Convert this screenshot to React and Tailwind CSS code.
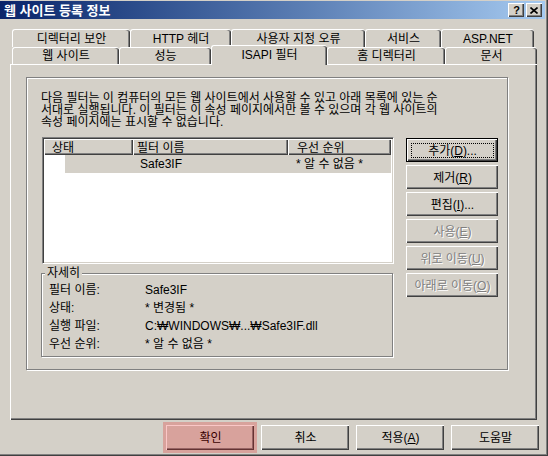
// 웹 사이트 등록 정보 (클래식 Windows 대화 상자)
const raised =
  "bg-[#d4d0c8] border-t border-l border-white shadow-[inset_-1px_-1px_0_#404040,inset_-2px_-2px_0_#808080]";
const etched = "border border-[#808080] shadow-[inset_1px_1px_0_#fff,1px_1px_0_#fff]";
const tabBase =
  "flex items-center justify-center rounded-t-[3px] border-t border-l border-white shadow-[inset_-1px_0_0_#404040,inset_-2px_0_0_#808080] bg-[#d4d0c8]";

function Tab({ className = "", children }) {
  return <div className={`${tabBase} ${className}`}>{children}</div>;
}

function Btn({ children, disabled = false, isDefault = false, className = "" }) {
  const text = disabled ? "text-[#808080] [text-shadow:1px_1px_0_#fff]" : "text-black";
  if (isDefault) {
    return (
      <div className={`border border-black ${className}`}>
        <div className={`${raised} h-full flex items-center justify-center p-[3px]`}>
          <div className="w-full h-full border border-dotted border-black flex items-center justify-center">
            <span className={text}>{children}</span>
          </div>
        </div>
      </div>
    );
  }
  return (
    <div className={`${raised} flex items-center justify-center ${className}`}>
      <span className={text}>{children}</span>
    </div>
  );
}

export default function App() {
  return (
    <div className="w-[548px] h-[456px] bg-[#d4d0c8] pt-[1px] overflow-hidden flex flex-col text-[12px] leading-[12px] text-black font-['Liberation_Sans','Noto_Sans_CJK_KR',sans-serif] shadow-[inset_-1px_-1px_0_#404040,inset_-2px_-2px_0_#808080]">
      {/* 타이틀 바 */}
      <div className="h-[18px] mr-[3px] flex items-center bg-linear-to-r from-[#0a246a] to-[#a6caf0] pl-[4px] pr-[3px]">
        <span className="text-white font-bold text-[13px] leading-[13px] flex-1">웹 사이트 등록 정보</span>
        <div className="flex gap-[2px]">
          <div className={`${raised} w-[16px] h-[14px] flex items-center justify-center`}>
            <span className="font-bold text-[11px] leading-[11px] font-['Liberation_Sans',sans-serif] -mt-[1px]">?</span>
          </div>
          <div className={`${raised} w-[16px] h-[14px] flex items-center justify-center`}>
            <svg width="8" height="7" viewBox="0 0 8 7" className="-mt-[1px] -ml-[1px]">
              <path d="M0.5 0.5 L7.5 6.5 M7.5 0.5 L0.5 6.5" stroke="#000" strokeWidth="1.6" fill="none" />
            </svg>
          </div>
        </div>
      </div>

      {/* 탭 */}
      <div className="mt-[10px] pl-[12px]">
        <div className="flex h-[18px]">
          <Tab className="w-[118px]">디렉터리 보안</Tab>
          <Tab className="w-[101px]">HTTP 헤더</Tab>
          <Tab className="w-[134px]">사용자 지정 오류</Tab>
          <Tab className="w-[76px]">서비스</Tab>
          <Tab className="w-[93px]">ASP.NET</Tab>
        </div>
        <div className="flex h-[17px]">
          <Tab className="w-[107px]">웹 사이트</Tab>
          <Tab className="w-[92px]">성능</Tab>
          <Tab className="w-[116px] h-[20px] -mt-[2px] relative z-10 pb-[2px]">ISAPI 필터</Tab>
          <Tab className="w-[118px]">홈 디렉터리</Tab>
          <Tab className="w-[92px]">문서</Tab>
        </div>
      </div>

      {/* 탭 페이지 */}
      <div className="ml-[10px] w-[527px] h-[356px] border-t border-l border-white shadow-[inset_-1px_-1px_0_#404040,inset_-2px_-2px_0_#808080]">
        <div className={`${etched} ml-[15px] mt-[12px] w-[482px] h-[293px]`}>
          {/* 설명 */}
          <div className="pl-[14px] pt-[14px] whitespace-nowrap">
            <div>다음 필터는 이 컴퓨터의 모든 웹 사이트에서 사용할 수 있고 아래 목록에 있는 순</div>
            <div>서대로 실행됩니다. 이 필터는 이 속성 페이지에서만 볼 수 있으며 각 웹 사이트의</div>
            <div>속성 페이지에는 표시할 수 없습니다.</div>
          </div>

          <div className="flex gap-[12px] pl-[15px] mt-[9px]">
            <div className="w-[352px]">
              {/* 필터 목록 */}
              <div className="w-[352px] h-[127px] bg-white border border-t-[#808080] border-l-[#808080] border-r-white border-b-white shadow-[inset_1px_1px_0_#404040,inset_-1px_-1px_0_#d4d0c8] p-[1px]">
                <div className="flex h-[16px]">
                  <div className={`${raised} w-[89px] pl-[7px] flex items-center`}>상태</div>
                  <div className={`${raised} w-[155px] pl-[3px] flex items-center`}>필터 이름</div>
                  <div className={`${raised} w-[103px] pl-[8px] flex items-center`}>우선 순위</div>
                  <div className={`${raised} flex-1`} />
                </div>
                <div className="flex h-[18px]">
                  <div className="w-[21px]" />
                  <div className="flex w-[326px] bg-[#d4d0c8] items-center">
                    <div className="w-[68px]" />
                    <div className="w-[155px] pl-[7px]">Safe3IF</div>
                    <div className="w-[103px] pl-[8px]">* 알 수 없음 *</div>
                  </div>
                </div>
              </div>

              {/* 자세히 */}
              <div className={`${etched} relative -ml-[1px] mt-[9px] w-[352px] h-[84px] pt-[7px] pl-[7px]`}>
                <div className="absolute -top-[7px] left-[3px] px-[2px] bg-[#d4d0c8]">자세히</div>
                <div className="flex h-[18px] items-center">
                  <div className="w-[96px]">필터 이름:</div>
                  <div>Safe3IF</div>
                </div>
                <div className="flex h-[18px] items-center">
                  <div className="w-[96px]">상태:</div>
                  <div>* 변경됨 *</div>
                </div>
                <div className="flex h-[18px] items-center">
                  <div className="w-[96px]">실행 파일:</div>
                  <div>C:₩WINDOWS₩...₩Safe3IF.dll</div>
                </div>
                <div className="flex h-[18px] items-center">
                  <div className="w-[96px]">우선 순위:</div>
                  <div>* 알 수 없음 *</div>
                </div>
              </div>
            </div>

            {/* 오른쪽 버튼 */}
            <div className="flex flex-col gap-[3px] mt-[1px]">
              <Btn isDefault className="w-[92px] h-[24px]">
                추가(<u>D</u>)...
              </Btn>
              <Btn className="w-[92px] h-[24px]">
                제거(<u>R</u>)
              </Btn>
              <Btn className="w-[92px] h-[24px]">
                편집(<u>I</u>)...
              </Btn>
              <Btn disabled className="w-[92px] h-[24px]">
                사용(<u>E</u>)
              </Btn>
              <Btn disabled className="w-[92px] h-[24px]">
                위로 이동(<u>U</u>)
              </Btn>
              <Btn disabled className="w-[92px] h-[24px]">
                아래로 이동(<u>O</u>)
              </Btn>
            </div>
          </div>
        </div>
      </div>

      {/* 하단 버튼 */}
      <div className="flex gap-[7px] mt-[5px] pl-[166px]">
        <div className="relative">
          <Btn className="w-[88px] h-[25px]">확인</Btn>
          <div className="absolute -inset-[3px] bg-[rgba(230,0,0,0.22)]" />
        </div>
        <Btn className="w-[88px] h-[25px]">취소</Btn>
        <Btn className="w-[88px] h-[25px]">
          적용(<u>A</u>)
        </Btn>
        <Btn className="w-[88px] h-[25px]">도움말</Btn>
      </div>
    </div>
  );
}
